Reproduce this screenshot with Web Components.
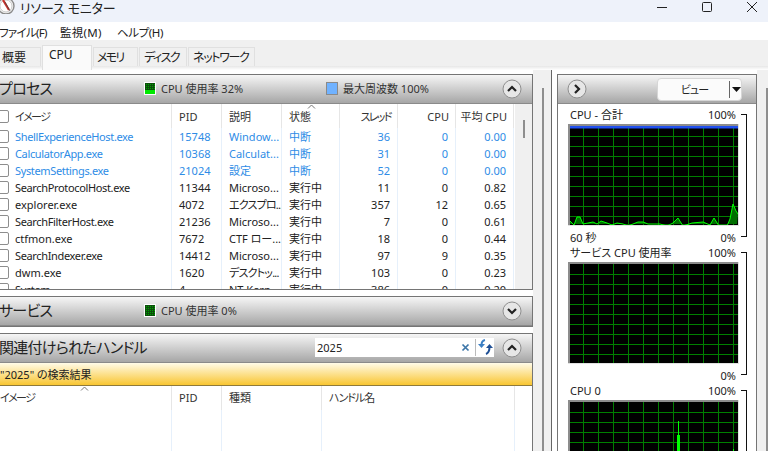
<!DOCTYPE html>
<html lang="ja">
<head>
<meta charset="utf-8">
<title>リソース モニター</title>
<style>
  html, body { margin: 0; height: 451px; overflow: hidden; background: #fff; }
  body { font: 11px "Noto Sans", "Noto Sans CJK JP", sans-serif; color: #222; font-feature-settings: "palt"; }
</style>
</head>
<body>
<rm-app></rm-app>
<script>
const CHEVRON_UP = 'M-4 2 L0 -2 L4 2';
const CHEVRON_DOWN = 'M-4 -2 L0 2 L4 -2';
const CHEVRON_RIGHT = 'M-2 -4 L2 0 L-2 4';

class RmTitlebar extends HTMLElement {
  constructor() {
    super();
    this.attachShadow({ mode: 'open' }).innerHTML = `
      <style>
        :host { display: flex; align-items: center; height: 22px; background: #eef2fa; flex: none; }
        svg { display: block; flex: none; }
        .icon { margin: 0 5px 8px 0; }
        .title { font-size: 13px; letter-spacing: -.2px; padding-bottom: 7px; }
        .ctl { margin-left: auto; display: flex; margin-bottom: 9px; padding-right: 11px; gap: 35px; }
      </style>
      <svg class="icon" width="15" height="14" viewBox="0 0 15 14">
        <circle cx="6" cy="6" r="8" fill="#f4f4f4" stroke="#8a8a8a" stroke-width="1.4"/>
        <circle cx="6" cy="6" r="6" fill="#fff" stroke="#c9c9c9"/>
        <path d="M3 0 L9 10" stroke="#c8302a" stroke-width="2.2"/>
        <path d="M5 2 L10 11" stroke="#444" stroke-width=".7"/>
      </svg>
      <span class="title">リソース モニター</span>
      <div class="ctl">
        <svg width="10" height="10"><path d="M0 5.5 H10" stroke="#222"/></svg>
        <svg width="10" height="10"><rect x=".5" y=".5" width="9" height="9" rx="1" fill="none" stroke="#222"/></svg>
        <svg width="10" height="10"><path d="M0 0 L10 10 M10 0 L0 10" stroke="#222"/></svg>
      </div>`;
  }
}

class RmMenubar extends HTMLElement {
  constructor() {
    super();
    this.attachShadow({ mode: 'open' }).innerHTML = `
      <style>
        :host { display: flex; align-items: center; height: 18px; background: #fff; flex: none; margin-left: -1px; font-size: 11.5px; padding-top: 1px; box-sizing: border-box; }
        span { flex: none; white-space: nowrap; }
        .a { width: 61px; letter-spacing: -.7px; } .b { width: 57px; letter-spacing: .3px; } .c { letter-spacing: -.4px; }
      </style>
      <span class="a">ファイル(F)</span><span class="b">監視(M)</span><span class="c">ヘルプ(H)</span>`;
  }
}

class RmTabs extends HTMLElement {
  constructor() {
    super();
    this.attachShadow({ mode: 'open' }).innerHTML = `
      <style>
        :host { display: flex; align-items: flex-start; height: 30px; background: linear-gradient(#f0f0f0 26px, #e6e6e6 26px, #f3f3f3 28px, #fff 30px); flex: none; margin-left: -6px; padding-top: 7px; box-sizing: border-box; font-size: 12px; }
        span { height: 19px; line-height: 19px; border: 1px solid #e0e0e0; border-bottom: 0; padding: 0 5px; box-sizing: border-box; margin-right: 1px; white-space: nowrap; flex: none; overflow: hidden; }
        .first { width: 47px; padding-left: 7px; }
        .on { background: #fafafa; height: 25px; margin-top: -2px; line-height: 18px; width: 50px; padding-left: 6px; }
        .m { width: 45px; padding-left: 3px; letter-spacing: -1.8px; }
        .d { width: 48px; padding-left: 4px; letter-spacing: -1.5px; }
        .n { width: 67px; padding-left: 4px; letter-spacing: -1.3px; }
      </style>
      <span class="first">概要</span><span class="on">CPU</span><span class="m">メモリ</span><span class="d">ディスク</span><span class="n">ネットワーク</span>`;
  }
}

// gradient header + optional body
class RmPanel extends HTMLElement {
  constructor() {
    super();
    const icon = this.getAttribute('chevron') === 'down' ? CHEVRON_DOWN : CHEVRON_UP;
    this.attachShadow({ mode: 'open' }).innerHTML = `
      <style>
        :host { display: block; box-sizing: border-box; border: 1px solid #757575; border-left: 0; flex: none; overflow: hidden; }
        header { display: flex; align-items: center; height: 28px; background: linear-gradient(#f6f6f6, #a6a6a6); border-bottom: 1px solid #8a8a8a; position: relative; }
        .title { font-size: 15px; letter-spacing: -.7px; padding: 0 0 3px 2px; width: 147px; box-sizing: border-box; white-space: nowrap; flex: none; }
        .mid { flex: 1; display: flex; align-items: center; color: #333; padding-bottom: 2px; }
        .chev { flex: none; margin-right: 10px; }
        .body { background: #fff; }
      </style>
      <header>
        <span class="title"><slot name="title"></slot></span>
        <div class="mid"><slot name="mid"></slot></div>
        <svg class="chev" width="20" height="20" viewBox="-10 -10 20 20">
          <circle r="9" fill="#e6e6e6" stroke="#8f8f8f"/>
          <path d="${icon}" fill="none" stroke="#222" stroke-width="2.2"/>
        </svg>
      </header>
      <div class="body"><slot></slot></div>`;
  }
}

class RmMeter extends HTMLElement {
  constructor() {
    super();
    const kind = this.getAttribute('kind');
    const box = kind === 'freq'
      ? '<rect x=".5" y=".5" width="11" height="12" fill="#70b2ff" stroke="#8a8a8a"/>'
      : `<rect width="12" height="13" fill="#fff"/>
         <rect x="1" y="1" width="10" height="11" fill="#0b4d0b"/>
         <rect x="1" y="1" width="10" height="11" fill="url(#d)"/>
         ${kind === 'cpu' ? '<rect x="1" y="8" width="10" height="4" fill="#00e800"/>' : ''}`;
    this.attachShadow({ mode: 'open' }).innerHTML = `
      <style>
        :host { display: inline-flex; align-items: center; gap: 5px; font-size: 11px; white-space: nowrap; }
        svg { display: block; }
      </style>
      <svg width="12" height="13">
        <defs><pattern id="d" width="2" height="2" patternUnits="userSpaceOnUse"><rect width="1" height="1" fill="#00a000"/></pattern></defs>
        ${box}
      </svg>
      <span><slot></slot></span>`;
  }
}

const PROCESSES = [
  ['ShellExperienceHost.exe', '15748', 'Window...', '中断', '36', '0', '0.00', 1],
  ['CalculatorApp.exe', '10368', 'Calculat...', '中断', '31', '0', '0.00', 1],
  ['SystemSettings.exe', '21024', '設定', '中断', '52', '0', '0.00', 1],
  ['SearchProtocolHost.exe', '11344', 'Microso...', '実行中', '11', '0', '0.82'],
  ['explorer.exe', '4072', 'エクスプロ...', '実行中', '357', '12', '0.65'],
  ['SearchFilterHost.exe', '21236', 'Microso...', '実行中', '7', '0', '0.61'],
  ['ctfmon.exe', '7672', 'CTF ロー...', '実行中', '18', '0', '0.44'],
  ['SearchIndexer.exe', '14412', 'Microso...', '実行中', '97', '9', '0.35'],
  ['dwm.exe', '1620', 'デスクトッ...', '実行中', '103', '0', '0.23'],
  ['System', '4', 'NT Kern...', '実行中', '386', '0', '0.20']
];

class RmProcessTable extends HTMLElement {
  constructor() {
    super();
    const rows = PROCESSES.map(r => `
      <div class="row ${r[7] ? 'susp' : ''}">
        <div class="c img ${/[A-Z]/.test(r[0]) ? 'tight' : ''}"><i></i>${r[0]}</div>
        <div class="c">${r[1]}</div><div class="c ${r[2].length > 6 && /^[^\x00-\x7f]/.test(r[2]) ? 'desc' : ''}">${r[2]}</div><div class="c">${r[3]}</div>
        <div class="c n">${r[4]}</div><div class="c n">${r[5]}</div><div class="c n">${r[6]}</div>
      </div>`).join('');
    this.attachShadow({ mode: 'open' }).innerHTML = `
      <style>
        :host { display: flex; height: 185px; overflow: hidden; position: relative; }
        .t { flex: none; width: 518px; }
        .row { display: grid; grid-template-columns: 175px 50px 60px 58px 58px 58px 58px 1px; height: 17px; line-height: 17px; white-space: nowrap; overflow: hidden; }
        .head { height: 24px; line-height: 25px; color: #333; }
        .c { padding-left: 7px; border-right: 1px solid #e6f0fb; box-sizing: border-box; overflow: hidden; }
        .head .c { border-right-color: #e6e6e6; height: 24px; }
        .n { text-align: right; padding: 0 7px 0 0; }
        .head .n { padding-right: 6px; }
        .img { padding-left: 18px; position: relative; }
        .tight { letter-spacing: -.35px; }
        .desc { letter-spacing: -.8px; }
        .kana { letter-spacing: -1.6px; }
        i { position: absolute; left: 0; top: 2px; width: 10px; height: 11px; border: 1px solid #8d8d8d; border-radius: 2px; background: #fff; }
        .head i { top: 6px; }
        .susp { color: #2e8ce6; }
        .caret { position: absolute; left: 310px; top: 0; }
        .bar { flex: 1; background: #f0f0f0; position: relative; }
        .bar b { position: absolute; left: 8px; top: 16px; width: 2px; height: 18px; background: #8e8e8e; }
      </style>
      <div class="t">
        <div class="row head">
          <div class="c img kana"><i></i>イメージ</div><div class="c">PID</div><div class="c">説明</div><div class="c">状態</div>
          <div class="c n kana">スレッド</div><div class="c n">CPU</div><div class="c n">平均 CPU</div>
        </div>
        ${rows}
      </div>
      <div class="bar"><b></b></div>
      <svg class="caret" width="9" height="5"><path d="M1 4.5 L4.5 1 L8 4.5" fill="none" stroke="#777"/></svg>`;
  }
}

class RmHandleTable extends HTMLElement {
  constructor() {
    super();
    this.attachShadow({ mode: 'open' }).innerHTML = `
      <style>
        :host { display: block; height: 66px; position: relative; overflow: hidden; }
        .row { display: grid; grid-template-columns: 175px 50px 100px 193px; height: 100%; width: 518px; }
        .c { padding-left: 7px; border-right: 1px solid #e6f0fb; box-sizing: border-box; white-space: nowrap; height: 100%; line-height: 23px; color: #333; position: relative; }
        .c::after { content: ""; position: absolute; right: -1px; top: 0; width: 1px; height: 24px; background: #e6e6e6; }
        .c:first-child { padding-left: 3px; letter-spacing: -1.6px; }
        .c:last-child { letter-spacing: -1px; }
        svg { position: absolute; left: 83px; top: 0; }
      </style>
      <div class="row"><div class="c">イメージ</div><div class="c">PID</div><div class="c">種類</div><div class="c">ハンドル名</div></div>
      <svg width="9" height="5"><path d="M1 4.5 L4.5 1 L8 4.5" fill="none" stroke="#777"/></svg>`;
  }
}

class RmSearch extends HTMLElement {
  constructor() {
    super();
    this.attachShadow({ mode: 'open' }).innerHTML = `
      <style>
        :host { display: flex; align-items: center; width: 179px; height: 19px; background: #fff; box-sizing: border-box; font-size: 11px; color: #222; margin-left: auto; margin-right: 8px; }
        span { flex: 1; padding-left: 2px; }
        svg { display: block; flex: none; }
        .sep { width: 1px; height: 17px; background: #bbb; margin: 0 1px 0 5px; }
      </style>
      <span>2025</span>
      <svg width="9" height="9"><path d="M1.5 1.5 L7.5 7.5 M7.5 1.5 L1.5 7.5" stroke="#3d76a8" stroke-width="1.7"/></svg>
      <div class="sep"></div>
      <svg width="17" height="16" viewBox="0 0 17 16">
        <path d="M1 5 H8 L4.5 9 Z" fill="#3b7fc4"/>
        <path d="M4.5 6 C4.5 3.5 5.5 1.5 8 1" fill="none" stroke="#3b7fc4" stroke-width="2"/>
        <path d="M9 9 H16 L12.5 5 Z" fill="#1f4f95"/>
        <path d="M12.5 8 C12.5 11 11.5 14 9 15" fill="none" stroke="#1f4f95" stroke-width="2"/>
      </svg>`;
  }
}

class RmViewButton extends HTMLElement {
  constructor() {
    super();
    this.attachShadow({ mode: 'open' }).innerHTML = `
      <style>
        :host { display: flex; align-items: center; width: 85px; height: 23px; background: #fbfbfb; border: 1px solid #d6d6d6; border-radius: 4px; box-sizing: border-box; font-size: 11px; }
        span { flex: none; width: 71px; text-align: center; padding-left: 2px; box-sizing: border-box; letter-spacing: -1px; }
        .sep { width: 1px; height: 17px; background: #666; }
        svg { display: block; margin-left: 2px; }
      </style>
      <span>ビュー</span><div class="sep"></div>
      <svg width="9" height="5"><path d="M0 0 H9 L4.5 5 Z" fill="#111"/></svg>`;
  }
}

class RmScrollStrip extends HTMLElement {
  constructor() {
    super();
    this.attachShadow({ mode: 'open' }).innerHTML = `
      <style>
        :host { display: block; box-sizing: border-box; flex: none; position: relative; background: #f0f0f0; }
        b { position: absolute; top: 18px; bottom: 0; width: 2px; background: #8e8e8e; left: var(--thumb, 0); }
      </style>
      <b></b>`;
  }
}

// 170x102 graph: grey top/left edge, 15px by 10px green grid
class RmGraph extends HTMLElement {
  constructor() {
    super();
    let lines = '';
    for (let x = 15; x <= 165; x += 15) lines += `M${x + .5} 0 V102 `;
    for (let y = 12; y <= 92; y += 10) lines += `M0 ${y + .5} H170 `;
    const pts = this.getAttribute('points');
    const area = pts ? `<polygon points="2,100 ${pts} 169,100" fill="#006e00"/>
      <polyline points="${pts}" fill="none" stroke="#00ff00"/>` : '';
    const top = this.hasAttribute('total') ? '<rect x="2" y="2" width="168" height="2.5" fill="#2050f0"/>' : '';
    const spike = this.hasAttribute('spike')
      ? '<path d="M110.5 21 V102 M109.5 35 V102 M111.5 35 V102 M165.5 49 V102" stroke="#00ff00" fill="none"/>' : '';
    this.attachShadow({ mode: 'open' }).innerHTML = `
      <style>
        :host { display: block; height: 102px; }
        svg { display: block; }
      </style>
      <svg width="171" height="102">
        <rect width="171" height="102" fill="#e2e2e2"/>
        <rect width="170" height="101" fill="#8c8c8c"/>
        <rect x="2" y="2" width="168" height="99" fill="#000"/>
        <svg x="2" y="2" width="168" height="99" viewBox="2 2 168 99"><path d="${lines}" stroke="#007f00" fill="none"/>${area}${top}${spike}</svg>
      </svg>`;
  }
}

class RmGraphCard extends HTMLElement {
  constructor() {
    super();
    const low = this.getAttribute('low');
    this.attachShadow({ mode: 'open' }).innerHTML = `
      <style>
        :host { display: block; position: relative; font-size: 11px; color: #222; padding: 0 0 0 10px; }
        .l { display: flex; justify-content: space-between; width: 166px; height: 20px; line-height: 22px; white-space: nowrap; padding-left: 2px; }
        .lo { height: 16px; line-height: 24px; }
        .br { position: absolute; left: 183px; top: 10px; bottom: 5px; width: 5px; border: solid #111; border-width: 1px 1px 1px 0; }
      </style>
      <div class="l"><span>${this.getAttribute('label')}</span><span>100%</span></div>
      <slot></slot>
      <div class="l lo"><span>${low || ''}</span><span>0%</span></div>
      <div class="br"></div>`;
  }
}

// traced from the reference, x = px/3 - 8, y = px/3 + 25
const TOTAL_POINTS = '10,72 14,76 17,68 20,68 23,75 28,74 33,73 37,75 41,72 47,74 52,76 57,74 63,75 68,77 78,73 83,73 88,75 93,75 100,75 107,77 113,74 118,69 123,77 132,74 143,73 150,76 154,69 159,77 167,77 170,70'
  .split(' ').map(p => { const a = p.split(','); return (+a[0] - 8) + ',' + (+a[1] + 25); }).join(' ')
  + ' 165,80 168,87 170,90';

class RmApp extends HTMLElement {
  constructor() {
    super();
    this.attachShadow({ mode: 'open' }).innerHTML = `
      <style>
        :host { display: flex; flex-direction: column; height: 451px; width: 768px; overflow: hidden; }
        main { display: flex; flex: 1; min-height: 0; overflow: hidden; }
        .left { flex: none; width: 536px; margin-left: -3px; padding-top: 4px; display: flex; flex-direction: column; gap: 6px; }
        .strip { width: 19px; --thumb: 9px; border-right: 1px solid #666; }
        .right { flex: none; width: 205px; padding: 4px 0 0 5px; box-sizing: border-box; }
        .rpanel { height: 400px; border: 1px solid #757575; box-sizing: border-box; }
        .rhead { display: flex; align-items: center; height: 28px; background: linear-gradient(#f6f6f6, #a6a6a6); border-bottom: 1px solid #8a8a8a; justify-content: space-between; padding: 0 14px 0 9px; }
        .rhead svg { display: block; }
        .found { height: 23px; line-height: 24px; background: linear-gradient(#fffbe8, #f9c632); border-bottom: 1px solid #8f7a3a; padding-left: 3px; font-size: 11px; box-sizing: border-box; }
        .end { width: 11px; --thumb: 9px; }
      </style>
      <rm-titlebar></rm-titlebar>
      <rm-menubar></rm-menubar>
      <rm-tabs></rm-tabs>
      <main>
        <div class="left">
          <rm-panel style="height:216px">
            <span slot="title">プロセス</span>
            <rm-meter slot="mid" kind="cpu" style="width:182px">CPU 使用率 32%</rm-meter>
            <rm-meter slot="mid" kind="freq">最大周波数 100%</rm-meter>
            <rm-process-table></rm-process-table>
          </rm-panel>
          <rm-panel style="height:31px" chevron="down">
            <span slot="title">サービス</span>
            <rm-meter slot="mid" kind="idle">CPU 使用率 0%</rm-meter>
          </rm-panel>
          <rm-panel style="height:200px">
            <span slot="title">関連付けられたハンドル</span>
            <rm-search slot="mid"></rm-search>
            <div class="found">"2025" の検索結果</div>
            <rm-handle-table></rm-handle-table>
          </rm-panel>
        </div>
        <rm-scroll-strip class="strip"></rm-scroll-strip>
        <div class="right">
          <div class="rpanel">
            <div class="rhead">
              <svg width="20" height="20" viewBox="-10 -10 20 20"><circle r="9" fill="#e6e6e6" stroke="#8f8f8f"/><path d="${CHEVRON_RIGHT}" fill="none" stroke="#222" stroke-width="2.2"/></svg>
              <rm-view-button></rm-view-button>
            </div>
            <rm-graph-card label="CPU - 合計" low="60 秒"><rm-graph total points="${TOTAL_POINTS}"></rm-graph></rm-graph-card>
            <rm-graph-card label="サービス CPU 使用率"><rm-graph></rm-graph></rm-graph-card>
            <rm-graph-card label="CPU 0"><rm-graph spike></rm-graph></rm-graph-card>
          </div>
        </div>
        <rm-scroll-strip class="end"></rm-scroll-strip>
      </main>`;
  }
}

customElements.define('rm-titlebar', RmTitlebar);
customElements.define('rm-menubar', RmMenubar);
customElements.define('rm-tabs', RmTabs);
customElements.define('rm-panel', RmPanel);
customElements.define('rm-meter', RmMeter);
customElements.define('rm-process-table', RmProcessTable);
customElements.define('rm-handle-table', RmHandleTable);
customElements.define('rm-search', RmSearch);
customElements.define('rm-view-button', RmViewButton);
customElements.define('rm-scroll-strip', RmScrollStrip);
customElements.define('rm-graph', RmGraph);
customElements.define('rm-graph-card', RmGraphCard);
customElements.define('rm-app', RmApp);
</script>
</body>
</html>
